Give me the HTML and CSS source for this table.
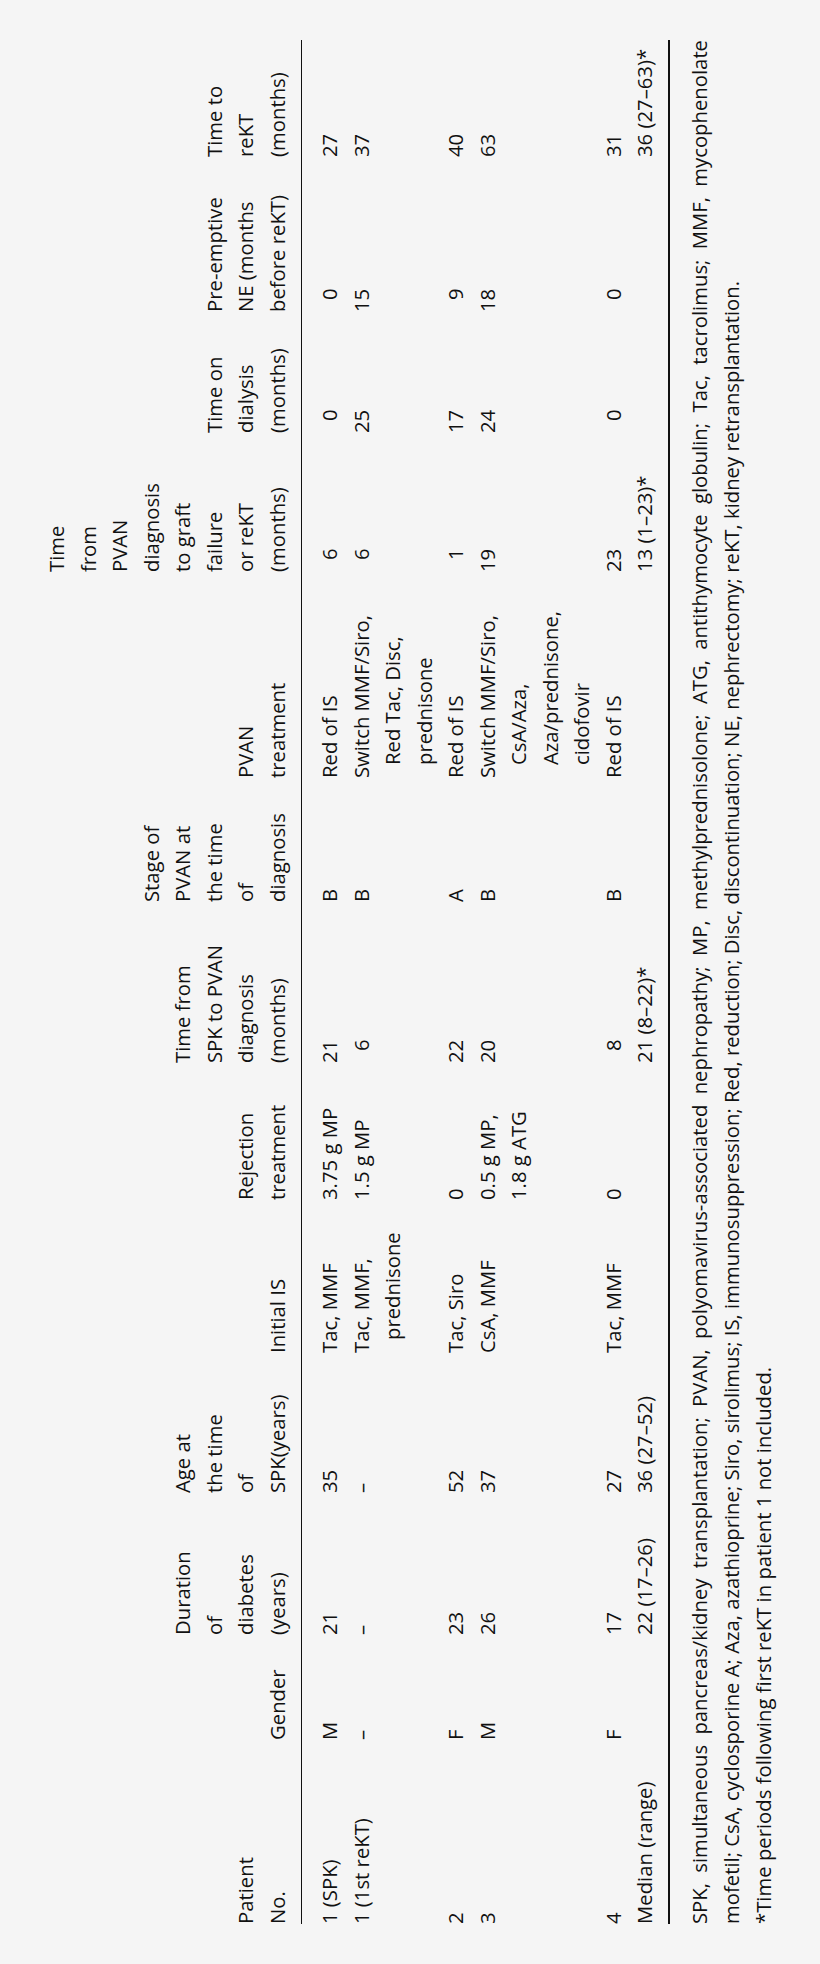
FILE: index.html
```html
<!DOCTYPE html>
<html lang="en">
<head>
<meta charset="utf-8">
<title>Table</title>
<link rel="stylesheet" href="styles.css">
</head>
<body>
<div class="page">
  <table class="t">
    <colgroup>
      <col class="c1"><col class="c2"><col class="c3"><col class="c4"><col class="c5"><col class="c6"><col class="c7"><col class="c8"><col class="c9"><col class="c10"><col class="c11"><col class="c12"><col class="c13">
    </colgroup>
    <thead>
      <tr>
        <th>Patient<br>No.</th>
        <th>Gender</th>
        <th>Duration<br>of<br>diabetes<br>(years)</th>
        <th>Age at<br>the time<br>of<br>SPK(years)</th>
        <th>Initial IS</th>
        <th>Rejection<br>treatment</th>
        <th>Time from<br>SPK to PVAN<br>diagnosis<br>(months)</th>
        <th>Stage of<br>PVAN at<br>the time<br>of<br>diagnosis</th>
        <th>PVAN<br>treatment</th>
        <th>Time<br>from<br>PVAN<br>diagnosis<br>to graft<br>failure<br>or reKT<br>(months)</th>
        <th>Time on<br>dialysis<br>(months)</th>
        <th>Pre-emptive<br>NE (months<br>before reKT)</th>
        <th>Time to<br>reKT<br>(months)</th>
      </tr>
    </thead>
    <tbody>
      <tr>
        <td>1 (SPK)</td><td>M</td><td>21</td><td>35</td>
        <td><div class="hang">Tac, MMF</div></td>
        <td>3.75 g MP</td>
        <td><span class="n2">21</span></td>
        <td>B</td>
        <td><div class="hang">Red of IS</div></td>
        <td><span class="n2">6</span></td>
        <td><span class="n2">0</span></td>
        <td><span class="n2">0</span></td>
        <td>27</td>
      </tr>
      <tr>
        <td>1 (1st reKT)</td><td>–</td><td>–</td><td>–</td>
        <td><div class="hang">Tac, MMF,<br>prednisone</div></td>
        <td>1.5 g MP</td>
        <td><span class="n2">6</span></td>
        <td>B</td>
        <td><div class="hang">Switch MMF/Siro,<br>Red Tac, Disc,<br>prednisone</div></td>
        <td><span class="n2">6</span></td>
        <td><span class="n2">25</span></td>
        <td><span class="n2">15</span></td>
        <td>37</td>
      </tr>
      <tr>
        <td>2</td><td>F</td><td>23</td><td>52</td>
        <td><div class="hang">Tac, Siro</div></td>
        <td>0</td>
        <td><span class="n2">22</span></td>
        <td>A</td>
        <td><div class="hang">Red of IS</div></td>
        <td><span class="n2">1</span></td>
        <td><span class="n2">17</span></td>
        <td><span class="n2">9</span></td>
        <td>40</td>
      </tr>
      <tr>
        <td>3</td><td>M</td><td>26</td><td>37</td>
        <td><div class="hang">CsA, MMF</div></td>
        <td>0.5 g MP,<br>1.8 g ATG</td>
        <td><span class="n2">20</span></td>
        <td>B</td>
        <td><div class="hang">Switch MMF/Siro,<br>CsA/Aza,<br>Aza/prednisone,<br>cidofovir</div></td>
        <td><span class="n2">19</span></td>
        <td><span class="n2">24</span></td>
        <td><span class="n2">18</span></td>
        <td>63</td>
      </tr>
      <tr>
        <td>4</td><td>F</td><td>17</td><td>27</td>
        <td><div class="hang">Tac, MMF</div></td>
        <td>0</td>
        <td><span class="n2">8</span></td>
        <td>B</td>
        <td><div class="hang">Red of IS</div></td>
        <td><span class="n2">23</span></td>
        <td><span class="n2">0</span></td>
        <td><span class="n2">0</span></td>
        <td>31</td>
      </tr>
      <tr>
        <td>Median (range)</td><td></td><td>22 (17–26)</td><td>36 (27–52)</td>
        <td></td><td></td>
        <td>21 (8–22)*</td>
        <td></td><td></td>
        <td>13 (1–23)*</td>
        <td></td><td></td>
        <td>36 (27–63)*</td>
      </tr>
    </tbody>
  </table>
  <div class="notes">
    <p class="just">SPK, simultaneous pancreas/kidney transplantation; PVAN, polyomavirus-associated nephropathy; MP, methylprednisolone; ATG, antithymocyte globulin; Tac, tacrolimus; MMF, mycophenolate</p>
    <p>mofetil; CsA, cyclosporine A; Aza, azathioprine; Siro, sirolimus; IS, immunosuppression; Red, reduction; Disc, discontinuation; NE, nephrectomy; reKT, kidney retransplantation.</p>
    <p>*Time periods following first reKT in patient 1 not included.</p>
  </div>
</div>
</body>
</html>
```

FILE: styles.css
```css
html, body {
  margin: 0;
  padding: 0;
}

html {
  background: #f5f5f5;
}

body {
  width: 820px;
  height: 1964px;
  overflow: hidden;
  background: #f5f5f5;
  font-family: "Open Sans", "Noto Sans", sans-serif;
  color: #111111;
}

/* The printed table is set sideways: text runs bottom-to-top and
   lines stack left-to-right (vertical-rl turned half a turn). */
.page {
  width: 820px;
  height: 1964px;
  box-sizing: border-box;
  writing-mode: vertical-rl;
  transform: scale(-1, -1);
  padding-block-start: 40px;
  padding-inline-start: 40px;
  font-size: 20.3px;
  line-height: 31.5px;
}

.t {
  border-collapse: collapse;
  table-layout: fixed;
  inline-size: 1884px;
}

.c1 { inline-size: 184px; }
.c2 { inline-size: 105px; }
.c3 { inline-size: 142px; }
.c4 { inline-size: 140px; }
.c5 { inline-size: 153px; }
.c6 { inline-size: 137px; }
.c7 { inline-size: 161px; }
.c8 { inline-size: 124px; }
.c9 { inline-size: 206px; }
.c10 { inline-size: 139px; }
.c11 { inline-size: 121px; }
.c12 { inline-size: 155px; }
.c13 { inline-size: 117px; }

.t th {
  font-weight: normal;
  text-align: start;
  vertical-align: bottom;
  padding: 0;
  padding-block-start: 1px;
  padding-block-end: 8px;
  border-block-end: 1px solid #111111;
  white-space: nowrap;
}

.t td {
  vertical-align: top;
  text-align: start;
  padding: 0;
  white-space: nowrap;
}

.t tbody tr:first-child td {
  padding-block-start: 12px;
}

.t tbody tr:last-child td {
  padding-block-end: 8px;
  border-block-end: 2px solid #111111;
}

.hang {
  padding-inline-start: 13px;
  text-indent: -13px;
}

.n2 {
  display: inline-block;
  inline-size: 2ch;
  text-align: end;
}

.notes {
  margin-block-start: 12px;
  inline-size: 1884px;
  line-height: 32px;
}

.notes p {
  margin: 0;
}

.notes .just {
  text-align: justify;
  text-align-last: justify;
}
```
